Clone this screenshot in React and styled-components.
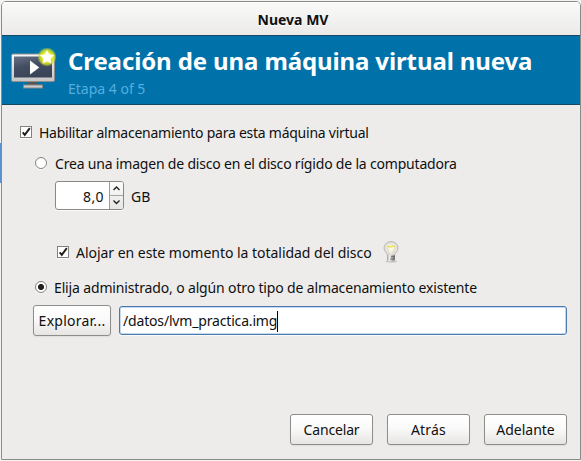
import React from "react";
import styled, { createGlobalStyle } from "styled-components";

const Global = createGlobalStyle`
  * { box-sizing: border-box; }
  html, body { margin: 0; overflow: hidden; background: #f8f8f7; }
`;

const Desktop = styled.div`
  width: 581px;
  height: 461px;
  padding: 1px 0 1px 1px;
  background:
    linear-gradient(#5a8fd2, #5a8fd2) 0 143px / 1px 40px no-repeat,
    #f3f3f2;
  font: 14px/20px "Noto Sans", "Open Sans", sans-serif;
  color: #101010;
`;

const Window = styled.main`
  display: flex;
  flex-direction: column;
  width: 580px;
  height: 459px;
  border: 1px solid #8b8b88;
  border-radius: 5px 5px 0 0;
  background: #edeceb;
  overflow: hidden;
`;

const TitleBar = styled.header`
  flex: 0 0 33px;
  display: flex;
  justify-content: center;
  align-items: center;
  padding: 2px 0 0 4px;
  font-weight: 700;
  background: linear-gradient(#fafaf8, #ebeae9);
  box-shadow: inset 0 1px #fff;
  text-shadow: 0 1px #fff;
`;

const Banner = styled.section`
  flex: 0 0 70px;
  display: flex;
  padding: 10px 0 0 7px;
  gap: 9px;
  background: #0072a9;
  border: 1px solid #174763;
  border-width: 1px 0;
`;

const Heading = styled.h1`
  margin: 0;
  font-size: 24px;
  line-height: 30px;
  color: #fff;
`;

const Step = styled.p`
  margin: 3px 0 0;
  line-height: 20px;
  color: #54aee0;
`;

const Text = styled.span`
  display: inline-block;
  white-space: nowrap;
  letter-spacing: ${(p) => p.$track || 0}px;
`;

const Row = styled.div`
  display: flex;
  align-items: center;
  height: ${(p) => p.$h}px;
  margin: ${(p) => p.$top || 0}px 0 0 ${(p) => p.$indent}px;
  gap: ${(p) => p.$gap}px;
  > ${Text} { padding-top: 2px; }
`;

const Form = styled.section`
  flex: 1;
  padding-top: 17px;
`;

const Check = styled.span`
  display: flex;
  width: 12px;
  height: 12px;
  border: 1px solid #81817e;
  background: #fff;
  box-shadow: 0 1px #fafafa;
  svg { display: block; margin: -1px; overflow: visible; flex: none; }
`;

const Radio = styled.span`
  width: 12px;
  height: 12px;
  border: 1px solid #81817e;
  border-radius: 50%;
  background: ${(p) => (p.$on ? "radial-gradient(circle at 50% 50%, #222 2.7px, #fff 3.4px)" : "#fff")};
  box-shadow: 0 1px #fafafa;
`;

const Spin = styled.div`
  display: flex;
  width: 69px;
  height: 29px;
  border: 1px solid #888884;
  border-radius: 3px;
  background: #fff;
  box-shadow: 0 1px #fafafa;
  overflow: hidden;
`;

const SpinValue = styled.div`
  flex: 1;
  padding: 5px 5px 0 0;
  text-align: right;
  letter-spacing: 0.4px;
`;

const SpinArrows = styled.div`
  width: 14px;
  border-left: 1px solid #9b9b98;
  background: linear-gradient(#fcfcfc, #e6e6e4);
  svg { display: block; }
`;

const Button = styled.button`
  display: flex;
  justify-content: center;
  align-items: center;
  width: ${(p) => p.$w || 83}px;
  height: 31px;
  padding: 1px 0 0;
  border: 1px solid #8d8d89;
  border-radius: 3px;
  background: linear-gradient(#fff, #fafafa 45%, #e6e5e3);
  box-shadow: 0 1px 1px #dfdedc;
  font: inherit;
  color: inherit;
`;

const Entry = styled.div`
  display: flex;
  align-items: center;
  width: 448px;
  height: 29px;
  padding: 1px 3px 0;
  border: 1px solid #4b79ae;
  border-radius: 3px;
  background: #fff;
  box-shadow: inset 0 0 0 1px #c4d8ee, 0 1px #fafafa;
`;

const Caret = styled.i`
  width: 1px;
  height: 21px;
  background: #000;
`;

const Footer = styled.footer`
  display: flex;
  justify-content: flex-end;
  gap: 14px;
  padding: 0 13px 14px 0;
`;

const CheckBox = () => (
  <Check>
    <svg width="12" height="12" viewBox="0 0 12 12">
      <path d="M2.7 6.3 4.8 8.9 9.8 2.1" fill="none" stroke="#1e1e1e" strokeWidth="1.9" />
    </svg>
  </Check>
);

const MachineIcon = () => (
  <svg width="50" height="46" viewBox="9 45.5 50 46">
    <defs>
      <linearGradient id="frame" x2="0" y2="1">
        <stop stopColor="#f7f7f7" /><stop offset="1" stopColor="#c4c4c4" />
      </linearGradient>
      <linearGradient id="screen" x2=".4" y2="1">
        <stop stopColor="#687184" /><stop offset=".5" stopColor="#444e62" /><stop offset="1" stopColor="#3a4459" />
      </linearGradient>
      <radialGradient id="glow">
        <stop offset=".45" stopColor="#f0f02c" /><stop offset=".75" stopColor="#cbdc25" stopOpacity=".85" /><stop offset="1" stopColor="#c5dc29" stopOpacity="0" />
      </radialGradient>
    </defs>
    <path d="M28 81h10v4H28z" fill="#555" />
    <rect x="23.5" y="84.5" width="19" height="3" fill="#ccc" stroke="#858585" />
    <rect x="11.5" y="53.5" width="43" height="27.5" rx="1.5" fill="url(#frame)" stroke="#8e8e8e" />
    <rect x="14" y="56" width="38" height="21" fill="url(#screen)" />
    <path d="M30 60v14l9.3-7z" fill="#fff" />
    <circle cx="47" cy="56.5" r="9.7" fill="url(#glow)" />
    <path d="m47 50 2 4.3 4.6.5-3.4 3.2.9 4.7-4.1-2.3-4.1 2.3.9-4.7-3.4-3.2 4.6-.5z" fill="#fff" stroke="#fff" strokeWidth=".6" />
  </svg>
);

const Bulb = () => (
  <svg width="16" height="22" viewBox="0 0 16 22">
    <defs>
      <radialGradient id="glass"><stop stopColor="#fffde6" /><stop offset="1" stopColor="#deded9" /></radialGradient>
      <linearGradient id="cap"><stop stopColor="#9b9b99" /><stop offset=".3" stopColor="#f1f1f0" /><stop offset="1" stopColor="#777" /></linearGradient>
    </defs>
    <ellipse cx="8.3" cy="20.3" rx="6" ry="1.3" fill="#c4c4c2" />
    <path d="M4.4 14.5C4.4 11.5 1 10.5 1 7a7 6.4 0 0 1 14 0c0 3.5-3.4 4.5-3.4 7.5z" fill="url(#glass)" stroke="#b3b2ae" strokeWidth=".9" />
    <path d="M3.7 5.7c1.5-1.5 2.8 1.3 4.3.2s2.8-1.4 4.3-.2" fill="none" stroke="#f3df5c" strokeWidth="1.5" />
    <path d="m4 6.5 2.7 7.4M12 6.5l-2.7 7.4" fill="none" stroke="#d5d1b8" strokeWidth=".8" />
    <path d="M4 14h8v4.5l-1.6 1.8H5.6L4 18.5z" fill="url(#cap)" />
    <path d="M8 15.7h4M7.3 18h4.5" stroke="#555" strokeWidth=".8" />
  </svg>
);

export default function App() {
  return (
    <Desktop>
      <Global />
      <Window>
        <TitleBar><Text>Nueva MV</Text></TitleBar>
        <Banner>
          <MachineIcon />
          <div>
            <Heading><Text $track={-0.12}>Creación de una máquina virtual nueva</Text></Heading>
            <Step><Text>Etapa 4 of 5</Text></Step>
          </div>
        </Banner>
        <Form>
          <Row $h={20} $indent={18} $gap={7}>
            <CheckBox /><Text $track={-0.25}>Habilitar almacenamiento para esta máquina virtual</Text>
          </Row>
          <Row $h={20} $top={11} $indent={33} $gap={8}>
            <Radio /><Text $track={-0.19}>Crea una imagen de disco en el disco rígido de la computadora</Text>
          </Row>
          <Row $h={29} $top={8} $indent={53} $gap={7}>
            <Spin>
              <SpinValue>8,0</SpinValue>
              <SpinArrows>
                <svg width="13" height="27" viewBox="0 0 13 27" fill="none">
                  <path d="M0 13.5h13" stroke="#a5a5a2" />
                  <path d="m3.5 8 3-3 3 3M3.5 18.5l3 3 3-3" stroke="#222" strokeWidth="1.4" />
                </svg>
              </SpinArrows>
            </Spin>
            <Text>GB</Text>
          </Row>
          <Row $h={22} $top={31} $indent={55} $gap={7}>
            <CheckBox /><Text $track={-0.03}>Alojar en este momento la totalidad del disco</Text>
            <Row $h={22} $indent={4}><Bulb /></Row>
          </Row>
          <Row $h={20} $top={14} $indent={33} $gap={7}>
            <Radio $on /><Text $track={-0.15}>Elija administrado, o algún otro tipo de almacenamiento existente</Text>
          </Row>
          <Row $h={31} $top={8} $indent={31} $gap={8}>
            <Button $w={78}><Text $track={0.25}>Explorar...</Text></Button>
            <Entry><Text $track={-0.17}>/datos/lvm_practica.img</Text><Caret /></Entry>
          </Row>
        </Form>
        <Footer>
          <Button><Text $track={-0.15}>Cancelar</Text></Button>
          <Button><Text $track={0.2}>Atrás</Text></Button>
          <Button><Text>Adelante</Text></Button>
        </Footer>
      </Window>
    </Desktop>
  );
}
